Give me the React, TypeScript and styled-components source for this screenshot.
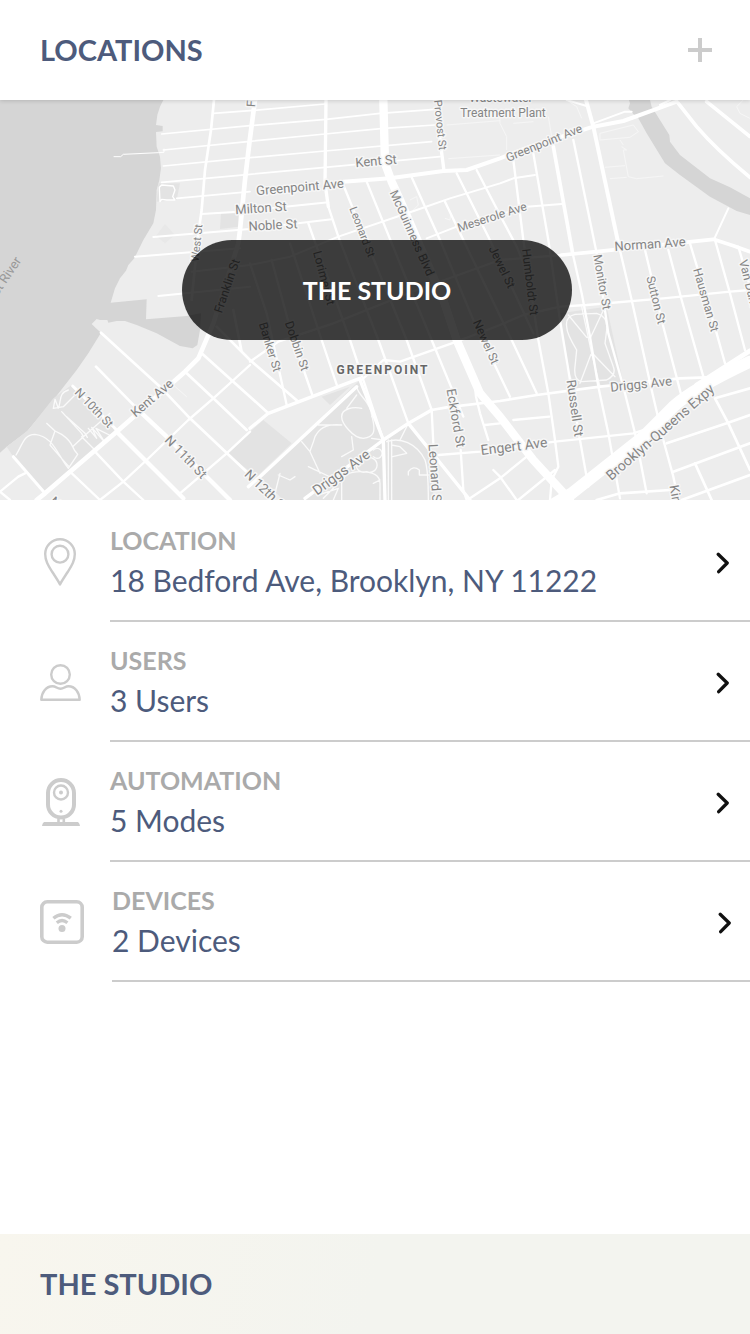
import React from "react";
import styled, { createGlobalStyle } from "styled-components";

const GlobalStyle = createGlobalStyle`
  *, *::before, *::after { box-sizing: border-box; }
  body {
    margin: 0;
    background: #ffffff;
    font-family: Lato, "Liberation Sans", sans-serif;
  }
`;

const Screen = styled.div`
  display: flex;
  flex-direction: column;
  min-height: 100vh;
`;

const Header = styled.header`
  position: relative;
  z-index: 1;
  display: flex;
  align-items: center;
  justify-content: space-between;
  height: 100px;
  padding: 0 38px 0 40px;
  background: #ffffff;
  box-shadow: 0 1px 4px rgba(0, 0, 0, 0.15);
`;

const Title = styled.h1`
  margin: 0;
  color: #4d5b7c;
  font-size: 29px;
  font-weight: 700;
  line-height: 36px;
`;

const AddButton = styled.button`
  display: flex;
  padding: 0;
  border: 0;
  background: none;
  color: #cccccc;
  cursor: pointer;
`;

const MapPanel = styled.section`
  position: relative;
  display: flex;
  align-items: center;
  justify-content: center;
  height: 400px;
  overflow: hidden;
  background: #ededed;
`;

const MapDrawing = styled.svg`
  position: absolute;
  inset: 0;
  width: 100%;
  height: 100%;
`;

const StreetLabel = styled.text<{ $size?: number }>`
  font-family: Roboto, "Liberation Sans", sans-serif;
  font-size: ${(p) => p.$size ?? 13}px;
  fill: #858585;
  stroke: #f6f6f6;
  stroke-width: 3px;
  stroke-linejoin: round;
  paint-order: stroke;
`;

const DistrictLabel = styled(StreetLabel)`
  font-weight: 700;
  letter-spacing: 2px;
  fill: #666666;
`;

const WaterLabel = styled(StreetLabel)`
  fill: #999999;
  stroke: none;
`;

const Pill = styled.button`
  position: relative;
  width: 52%;
  height: 100px;
  margin: 0 0 20px 4px;
  border: 0;
  border-radius: 50px;
  background: rgba(0, 0, 0, 0.75);
  color: #ffffff;
  font-family: inherit;
  font-size: 25px;
  font-weight: 700;
  line-height: 30px;
  cursor: pointer;
`;

const List = styled.ul`
  margin: 0;
  padding: 2px 0 0;
  list-style: none;
`;

const Row = styled.a<{ $iconWidth: number }>`
  display: grid;
  grid-template-columns: ${(p) => p.$iconWidth}px 1fr;
  column-gap: 28px;
  height: 120px;
  padding-left: 40px;
  color: inherit;
  text-decoration: none;
`;

const IconSlot = styled.span`
  display: flex;
  align-items: center;
  justify-content: center;
  color: #cccccc;
`;

const RowBody = styled.span<{ $end: number }>`
  display: flex;
  align-items: center;
  justify-content: space-between;
  padding-top: 4px;
  padding-right: ${(p) => p.$end}px;
  border-bottom: 2px solid #cccccc;
`;

const RowText = styled.span`
  display: flex;
  flex-direction: column;
  gap: 4px;
  padding-bottom: 2px;
`;

const RowLabel = styled.span`
  color: #aaaaaa;
  font-size: 25px;
  font-weight: 700;
  line-height: 32px;
`;

const RowValue = styled.span`
  color: #4d5b7c;
  font-size: 30px;
  line-height: 40px;
`;

const Footer = styled.footer`
  display: flex;
  align-items: center;
  height: 100px;
  margin-top: auto;
  padding: 0 40px;
  background: linear-gradient(100deg, #f8f6ee, #f3f4ef 50%);
`;

const PinIcon = () => (
  <svg width="42" height="48" viewBox="0 0 42 48" fill="none" stroke="currentColor" strokeWidth="2.4">
    <path d="M20 46.4C18 42.5 15.5 39 12 33.5C8 27 5.2 22.5 5.2 16A14.8 14.8 0 0 1 34.8 16C34.8 22.5 32 27 28 33.5C24.5 39 22 42.5 20 46.4Z" strokeLinejoin="round" />
    <circle cx="20" cy="16.2" r="8.4" />
  </svg>
);

const UserIcon = () => (
  <svg width="42" height="40" viewBox="0 0 42 40" fill="none" stroke="currentColor" strokeWidth="2.4">
    <circle cx="20.5" cy="12.5" r="9.3" />
    <path d="M1.300 37.800C1.600 30.500 6 24.300 12.500 24.300C16 24.300 17 26.800 20.500 26.800C24 26.800 25 24.300 28.500 24.300C35 24.300 39.400 30.500 39.700 37.800Z" strokeLinejoin="round" />
  </svg>
);

const CameraIcon = () => (
  <svg width="42" height="48" viewBox="0 0 42 48" fill="none" stroke="currentColor">
    <rect x="8" y="2" width="26" height="37.5" rx="13" strokeWidth="4" />
    <circle cx="21" cy="14.5" r="7" strokeWidth="2.4" />
    <circle cx="21" cy="14.5" r="2" fill="currentColor" stroke="none" />
    <circle cx="21" cy="33.2" r="1.5" fill="currentColor" stroke="none" />
    <path d="M18.5 40.5V45M23.8 40.5V45" strokeWidth="2.6" />
    <path d="M4 44H38Q39.8 45.5 40 48H2Q2.2 45.5 4 44Z" fill="currentColor" stroke="none" />
  </svg>
);

const DeviceIcon = () => (
  <svg width="44" height="44" viewBox="0 0 44 44" fill="none" stroke="currentColor">
    <rect x="1.8" y="1.8" width="40.4" height="40.4" rx="5.5" strokeWidth="3.6" />
    <path d="M13.4 18.2Q22 11.2 30.8 18.2" strokeWidth="3.4" />
    <path d="M16.8 22.8Q22 18.2 27.4 22.8" strokeWidth="3.2" />
    <circle cx="22" cy="28.4" r="3.5" fill="currentColor" stroke="none" />
  </svg>
);

const Chevron = () => (
  <svg width="14" height="22" viewBox="0 0 14 22" fill="none" stroke="#111111" strokeWidth="3.3" strokeLinecap="round" strokeLinejoin="round" aria-hidden="true">
    <path d="M2.2 2.300L11.200 11L2.700 19.700" />
  </svg>
);

type Road = [width: number, d: string];

const roads: Road[] = [
  [5, "M640 40L750 32L975 12M485 102L750 77L978 58L1140 40L1305 28M490 150L750 124L975 102L1150 85L1305 75M490 198L750 173L975 153L1295 125M485 247L750 223L975 202L1320 170M530 295L750 275"],
  [6, "M605 342L715 335L985 307M460 411L750 387L995 358M405 470L720 445M475 588L750 560M575 515L750 495L870 470L1015 410L1250 330L1350 295L1500 250L1540 235L1605 225"],
  [3, "M342 170L362 170L370 163L475 158L492 157V147"],
  [8, "M642 0L633 90L615 210L605 330L595 400L575 600"],
  [14, "M765 0L748 130L735 240L720 390L715 430L640 670L595 775L555 815L350 995L135 1180L110 1200"],
  [10, "M978 0L975 250L985 320"],
  [7, "M985 320L1015 410L1135 720L1225 970M925 370L1050 720L1150 1020M870 430L965 720L1012 860M815 480L880 720L938 888M750 490L800 640L860 915"],
  [7, "M1030 255L1220 720L1295 930M1100 245L1220 540L1295 720L1390 950M1235 232L1320 420L1420 660L1530 890M1335 305L1390 420L1535 720L1610 880M1370 220L1465 410L1600 700M1430 210L1505 355L1550 440L1600 560"],
  [7, "M1540 180L1570 420L1615 720L1645 880L1665 1020L1675 1100L1655 1140L1650 1200M1600 160L1645 420L1680 660L1710 840L1740 1020L1765 1160"],
  [11, "M1660 140L1718 460"],
  [7, "M1718 460L1745 580L1770 710L1795 860L1825 1000L1860 1195M1720 120L1790 460L1825 700L1870 860L1905 1000L1940 1180"],
  [12, "M1758 0L1780 80L1855 430"],
  [7, "M1855 430L1895 600L1955 870L1990 1020L2020 1130L2035 1200M1935 450L1990 680L2045 890M2005 450L2045 600L2110 830M2070 430L2100 530L2150 700L2175 790M2145 420L2190 580L2235 750M2215 440L2250 560"],
  [12, "M1030 245L1170 235L1330 213L1400 210L1500 175L1590 140L1780 80L1870 63L2030 5"],
  [10, "M1315 0L1320 120L1332 213"],
  [11, "M1685 465L1790 455L2140 418L2200 437L2250 455"],
  [6, "M2142 418L2185 325M1280 415L1370 380L1580 320L1685 312M1780 70L1875 35L1895 35M1980 15L2010 0M1700 0L1760 18"],
  [7, "M750 785L800 750L835 725L1000 670L1250 570L1500 480L1685 465M1085 840L1150 780L1200 785L1370 725L1500 675L1570 645L1680 620L1760 615L1990 595L2190 575L2250 570"],
  [11, "M2035 10L2090 80Q2150 150 2250 232M2120 5L2250 110"],
  [25, "M1150 0L1155 190L1175 245L1200 300L1330 600L1370 720L1440 880L1500 950L1600 1080L1710 1200"],
  [36, "M1640 1225L1715 1180L1930 1010L2020 920Q2080 865 2250 785"],
  [14, "M2090 855L2250 752"],
  [8, "M1295 930L1340 922L1500 903L1610 885L1800 860L2040 835L2120 832"],
  [10, "M915 1195L1150 1020L1225 970L1295 930M750 985L805 940L1080 835M1080 840L1150 1020L1155 1200M1070 860L780 1130L745 1160M1225 970L1410 1200"],
  [7, "M1295 930L1300 1030M1315 1065L1440 1055L1665 1025L1900 1000L1930 990M1382 1050L1390 1170L1400 1200M1425 860L1428 890L1440 940L1465 1020M1455 975L1500 970M1540 960L1648 950M1410 1195L1500 1135L1580 1070M1555 1200L1665 1110M1480 1110L1500 1130L1550 1200"],
  [8, "M2000 1030L2180 970L2250 945M2020 1115L2250 1030M2045 1200L2250 1125M2145 895L2250 865M2145 895L2185 970L2250 1110M2085 1090L2135 1200M1790 1200L1860 1180L2010 1170"],
  [8, "M303 698L480 860L570 955L750 1125M288 800L420 935M560 820L640 895L740 990M605 760L750 890L805 940M650 680L750 780L895 905M700 630L725 755"],
  [13, "M420 935L500 1010L690 1200M350 995L550 1195"],
  [9, "M218 858L350 990M40 1070L135 1180"],
  [7, "M300 1200L370 1145L440 1080L565 960L640 895L750 795M540 1180L680 1060L750 995M285 1055L370 1145L430 1200M210 1115L300 1200M0 1175L55 1130L75 1120M0 1175L30 1200"],
];

const footpaths =
  "M48 1065C70 1030 70 1005 105 1003C160 1010 170 1060 205 1105M140 970L165 993L150 1035M165 993L185 1003C225 1030 210 1040 233 1063L205 1105M150 1035L180 1070L207 1100M218 1040L250 1010M205 870C175 880 185 900 175 925L165 898L160 925L190 920L222 888M185 935L245 1000L250 1010L330 940M200 950L255 1000L262 1012M265 985L290 1015L275 982L315 1028L288 985L328 1005M245 1010L290 1055" +
  "M1070 860C1075 890 1110 900 1115 945C1130 1000 1120 1010 1090 1015C1060 1015 1025 970 1025 950C1025 925 1060 920 1085 925M1070 885L1040 925M1115 950L1125 945M1025 975C985 970 960 980 945 1010C940 1030 930 1050 930 1055L960 1120M905 1025L930 1055M955 975L1025 975M1055 1010L1060 1050L1025 1070M1115 1015L1150 1020M925 1100L1010 1140M840 1120L820 1200M835 1125L870 1140L885 1130" +
  "M1025 1200V1150Q1030 1115 1080 1115Q1140 1115 1140 1150V1200M1120 1150L1140 1140M1100 1075A22 22 0 1 1 1100 1115A22 22 0 1 1 1100 1075M1120 1050A15 15 0 1 1 1120 1070M955 1185L1015 1165L1000 1200M970 1195L1015 1150" +
  "M1165 1020V1200M1175 1020V1200M1160 1025C1200 1010 1250 1030 1275 1080Q1285 1110 1285 1200M1175 1035L1200 1040L1220 1060L1178 1070M1225 1125V1115Q1240 1095 1258 1110V1125H1285M1225 970L1200 1020" +
  "M1700 680Q1695 650 1725 643L1790 640Q1825 650 1820 690L1815 730L1840 800Q1850 825 1820 840L1745 845Q1720 840 1725 800L1730 750Q1700 700 1700 680M1705 645L1760 712H1772L1815 620M1745 620L1775 760L1800 860M1845 830L1780 763H1773L1740 850";

const faintPaths =
  "M1500 50V70L1520 110V150M1645 50L1655 110M1540 70L1600 65M1800 100L1900 75L1915 95L1890 112L1800 120ZM1860 120L1870 135M1865 140L1880 150L1870 150L1885 230L1910 236L1990 228M1815 202L1875 197M1830 236L1880 232M1700 0L1730 20L1745 55M2230 0L2210 20L2220 40L2250 55M1340 75L1500 62M1345 176L1500 165M1230 300L1250 290L1255 315L1240 330M1335 355L1350 360L1352 345M520 855L560 890";

type Label = { text: string; x: number; y: number; turn: number; from?: "start" | "end"; size?: number };

const labels: Label[] = [
  { text: "Greenpoint Ave", x: 300, y: 87, turn: -5 },
  { text: "Milton St", x: 261, y: 108, turn: -4 },
  { text: "Noble St", x: 273, y: 125, turn: -3 },
  { text: "Kent St", x: 376, y: 61, turn: -5 },
  { text: "Greenpoint Ave", x: 544, y: 43, turn: -22, size: 12 },
  { text: "Provost St", x: 440, y: 25, turn: 84, size: 11 },
  { text: "Wastewater", x: 501, y: -2, turn: 0, size: 12 },
  { text: "Treatment Plant", x: 503, y: 13, turn: 0, size: 12 },
  { text: "Meserole Ave", x: 492, y: 117, turn: -18, size: 12 },
  { text: "McGuinness Blvd", x: 412, y: 133, turn: 66, size: 12 },
  { text: "Leonard St", x: 362, y: 132, turn: 69, size: 11 },
  { text: "Lorimer St", x: 324, y: 178, turn: 75, size: 12 },
  { text: "Norman Ave", x: 650, y: 144, turn: -4 },
  { text: "Jewel St", x: 502, y: 167, turn: 64, size: 12 },
  { text: "Humboldt St", x: 530, y: 182, turn: 83, size: 12 },
  { text: "West St", x: 197, y: 143, turn: -84, size: 11 },
  { text: "Franklin St", x: 227, y: 186, turn: -71, size: 12 },
  { text: "Monitor St", x: 602, y: 182, turn: 80, size: 12 },
  { text: "Sutton St", x: 656, y: 200, turn: 76, size: 12 },
  { text: "Hausman St", x: 706, y: 200, turn: 74, size: 12 },
  { text: "Van Dam St", x: 743, y: 160, turn: 76, from: "start", size: 12 },
  { text: "Banker St", x: 270, y: 247, turn: 73, size: 12 },
  { text: "Dobbin St", x: 297, y: 246, turn: 71, size: 12 },
  { text: "Newel St", x: 486, y: 242, turn: 66, size: 12 },
  { text: "Eckford St", x: 456, y: 318, turn: 80 },
  { text: "Leonard St", x: 433, y: 344, turn: 86, from: "start" },
  { text: "Russell St", x: 575, y: 308, turn: 82 },
  { text: "Driggs Ave", x: 641, y: 284, turn: -6 },
  { text: "Engert Ave", x: 514, y: 346, turn: -7, size: 14 },
  { text: "Brooklyn-Queens Expy", x: 660, y: 332, turn: -41, size: 14 },
  { text: "Driggs Ave", x: 341, y: 372, turn: -36, size: 14 },
  { text: "Kent Ave", x: 152, y: 298, turn: -40 },
  { text: "N 10th St", x: 94, y: 308, turn: 46, size: 12 },
  { text: "N 11th St", x: 186, y: 357, turn: 46 },
  { text: "N 12th St", x: 247, y: 372, turn: 44, from: "start" },
  { text: "N 9th St", x: 52, y: 399, turn: 44, from: "start" },
  { text: "Kingsland Ave", x: 674, y: 385, turn: 80, from: "start" },
  { text: "Franklin St", x: 251, y: 7, turn: -86, from: "start", size: 12 },
];

const StreetMap = () => (
  <MapDrawing viewBox="0 0 750 400" preserveAspectRatio="xMidYMid slice" role="img" aria-label="Map of Greenpoint">
    <g transform="scale(0.333333)">
      <rect width="2250" height="1200" fill="#ededed" />
      <path
        fill="#d5d5d5"
        d="M0 0H490L480 20L472 45L468 75L488 78V94L468 96L470 140L480 170L483 205L478 240L470 270L468 330L460 370L430 420L403 475L385 495L378 512L360 535L345 565L332 608L440 598L438 658L560 648L603 640L600 690L592 735L578 745L540 738L470 700L410 675L375 663H350L325 668L322 660H300L290 657L275 672L288 685L303 698L265 760L230 810L160 900L80 995L20 1040L0 1058Z"
      />
      <path
        fill="#d5d5d5"
        d="M1887 0L1890 10L1885 25L1900 42L1915 55L1940 100L1995 190L2040 225L2130 290L2210 333L2250 345V295L2190 262L2130 235L2040 165L2010 125L2008 105L1955 20L1950 0Z"
      />
      <g fill="#e3e3e3">
        <path d="M20 1040L85 990L160 895L215 855L340 985L345 1000L140 1180L40 1070Z" />
        <path d="M1080 840L1150 1020L1155 1200H850L780 1130Z" />
        <path d="M1150 1020L1225 970L1290 1060L1300 1200H1155Z" />
        <path d="M790 960L875 1030L770 1130L680 1060L750 995ZM965 890L990 915L1050 860Z" />
        <path d="M1680 640L1820 620L1870 850L1730 870L1700 800Z" />
        <path d="M475 250H540L530 300L470 305ZM663 340H715V380L660 387Z" />
        <path d="M495 372L525 405L495 430L468 408Z" fill="#e8e8e8" />
      </g>
      <path d={faintPaths} fill="none" stroke="#f6f6f6" strokeWidth="3" />
      <g fill="none" stroke="#ffffff" strokeLinejoin="round" strokeLinecap="round">
        <path d={footpaths} stroke="#fafafa" strokeWidth="4" />
        <path d="M478 262L485 255L520 258L525 270L518 290L525 300H500L485 298L480 305Z" strokeWidth="4" />
        {roads.map(([width, d]) => (
          <path key={d} d={d} strokeWidth={width} />
        ))}
      </g>
    </g>
    {labels.map(({ text, x, y, turn, from, size }) => (
      <StreetLabel
        key={text + x}
        $size={size}
        textAnchor={from ?? "middle"}
        dominantBaseline="central"
        transform={`translate(${x} ${y}) rotate(${turn})`}
      >
        {text}
      </StreetLabel>
    ))}
    <WaterLabel textAnchor="end" dominantBaseline="central" transform="translate(18 158) rotate(-56)">
      East River
    </WaterLabel>
    <DistrictLabel $size={12} x="383" y="270" textAnchor="middle" dominantBaseline="central">
      GREENPOINT
    </DistrictLabel>
  </MapDrawing>
);

const items = [
  { label: "LOCATION", value: "18 Bedford Ave, Brooklyn, NY 11222", icon: <PinIcon />, iconWidth: 42, end: 20 },
  { label: "USERS", value: "3 Users", icon: <UserIcon />, iconWidth: 42, end: 20 },
  { label: "AUTOMATION", value: "5 Modes", icon: <CameraIcon />, iconWidth: 42, end: 20 },
  { label: "DEVICES", value: "2 Devices", icon: <DeviceIcon />, iconWidth: 44, end: 18 },
];

export default function App() {
  return (
    <>
      <GlobalStyle />
      <Screen>
        <Header>
          <Title>LOCATIONS</Title>
          <AddButton type="button" aria-label="Add location">
            <svg width="24" height="24" viewBox="0 0 24 24" stroke="currentColor" strokeWidth="4">
              <path d="M12 0V24M0 12H24" />
            </svg>
          </AddButton>
        </Header>
        <MapPanel>
          <StreetMap />
          <Pill type="button">THE STUDIO</Pill>
        </MapPanel>
        <List>
          {items.map((item) => (
            <li key={item.label}>
              <Row href={`#${item.label.toLowerCase()}`} $iconWidth={item.iconWidth}>
                <IconSlot aria-hidden="true">{item.icon}</IconSlot>
                <RowBody $end={item.end}>
                  <RowText>
                    <RowLabel>{item.label}</RowLabel>
                    <RowValue>{item.value}</RowValue>
                  </RowText>
                  <Chevron />
                </RowBody>
              </Row>
            </li>
          ))}
        </List>
        <Footer>
          <Title as="h2">THE STUDIO</Title>
        </Footer>
      </Screen>
    </>
  );
}
